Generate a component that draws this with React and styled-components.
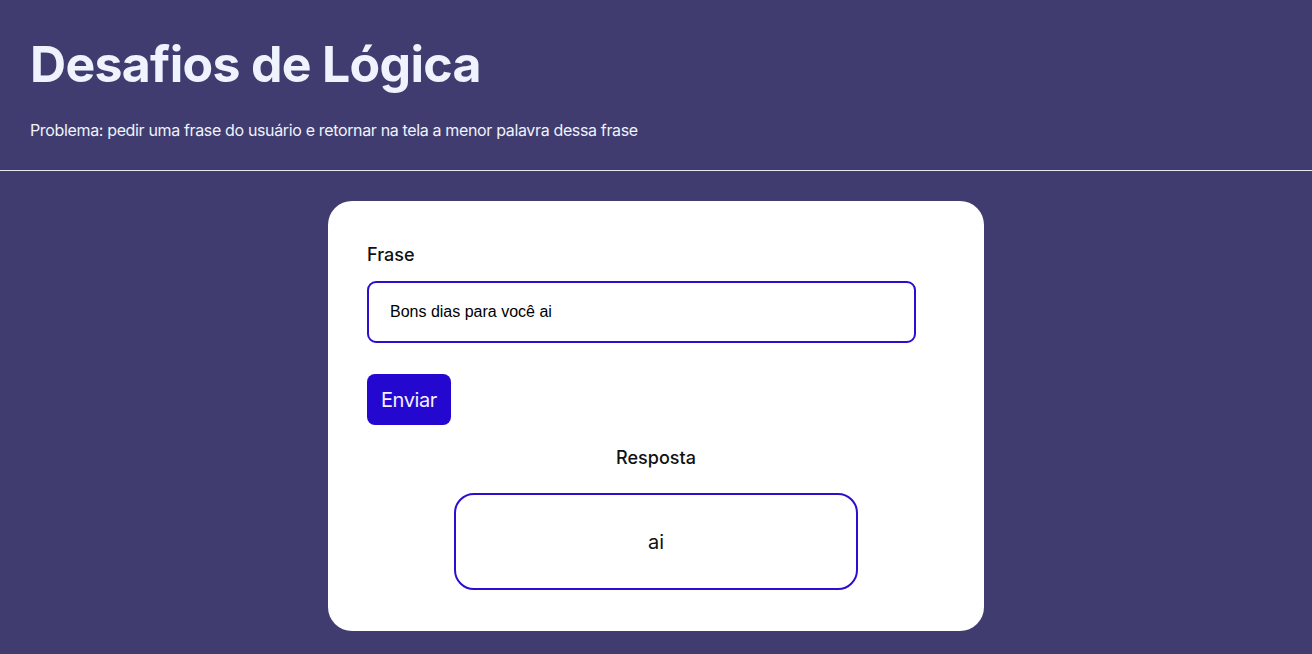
import React from "react";
import styled, { createGlobalStyle } from "styled-components";

const Global = createGlobalStyle`
  * { box-sizing: border-box; }
  html, body { margin: 0; padding: 0; background: #413c6f; }
  body { font-family: Inter, "Noto Sans", sans-serif; }
`;

const Header = styled.header`
  padding: 30px 30px 30px;
  border-bottom: 1px solid #e6e6ee;
  color: #eef3fd;
`;

const Title = styled.h1`
  margin: 0;
  font-size: 50px;
  font-weight: 700;
  letter-spacing: -0.7px;
  line-height: 68px;
`;

const Subtitle = styled.p`
  margin: 22px 0 0;
  font-size: 16px;
  letter-spacing: -0.35px;
  line-height: 20px;
`;

const Main = styled.main`
  display: flex;
  justify-content: center;
  padding-top: 30px;
`;

const Card = styled.section`
  width: 656px;
  height: 430px;
  background: #ffffff;
  border-radius: 24px;
  padding: 41px 39px;
  display: flex;
  flex-direction: column;
`;

const Label = styled.label`
  font-size: 18px;
  font-weight: 500;
  color: #111;
  line-height: 26px;
`;

const Input = styled.input`
  margin-top: 13px;
  width: 549px;
  height: 62px;
  border: 2px solid #2a0fd0;
  border-radius: 9px;
  padding: 0 21px;
  font-family: "Liberation Sans", Arial, sans-serif;
  font-size: 16px;
  color: #000;
  outline: none;
`;

const Button = styled.button`
  margin-top: 31px;
  align-self: flex-start;
  height: 51px;
  padding: 0 14px;
  border: none;
  border-radius: 8px;
  background: #2508d0;
  color: #f3f0ff;
  font-family: Inter, "Noto Sans", sans-serif;
  font-size: 20px;
  letter-spacing: -0.4px;
`;

const AnswerTitle = styled.h2`
  margin: 20px 0 0;
  text-align: center;
  font-size: 18px;
  font-weight: 500;
  color: #111;
  line-height: 26px;
`;

const AnswerBox = styled.div`
  margin: 22px auto 0;
  width: 404px;
  height: 97px;
  border: 2px solid #2a0fd0;
  border-radius: 20px;
  display: flex;
  align-items: center;
  justify-content: center;
  font-size: 20px;
  color: #111;
`;

export default function App() {
  return (
    <>
      <Global />
      <Header>
        <Title>Desafios de Lógica</Title>
        <Subtitle>
          Problema: pedir uma frase do usuário e retornar na tela a menor palavra dessa frase
        </Subtitle>
      </Header>
      <Main>
        <Card>
          <Label htmlFor="frase">Frase</Label>
          <Input id="frase" defaultValue="Bons dias para você ai" />
          <Button>Enviar</Button>
          <AnswerTitle>Resposta</AnswerTitle>
          <AnswerBox>ai</AnswerBox>
        </Card>
      </Main>
    </>
  );
}
